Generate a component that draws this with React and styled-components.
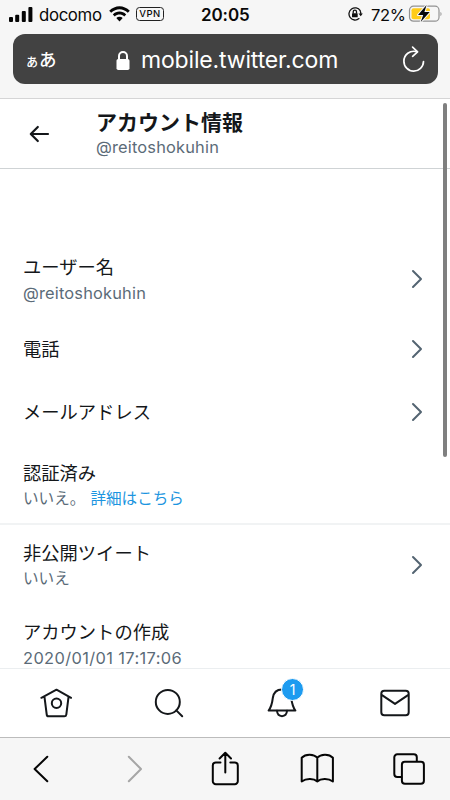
import React from 'react';
import styled, { createGlobalStyle } from 'styled-components';

const GlobalStyle = createGlobalStyle`
  * { box-sizing: border-box; }
  body {
    margin: 0;
    background: #fff;
    color: #14171a;
    font-family: Inter, "Noto Sans CJK JP", sans-serif;
  }
`;

const Screen = styled.div`
  width: 450px;
  height: 800px;
  display: flex;
  flex-direction: column;
  overflow: hidden;
  background: #fff;
`;

const BrowserTop = styled.div`
  height: 99px;
  flex: none;
  background: #f6f6f6;
  border-bottom: 1px solid #d5d5d6;
`;

const StatusBar = styled.div`
  height: 34px;
  padding: 0 7px 6px 9px;
  display: grid;
  grid-template-columns: 192px 1fr 95px;
  align-items: center;
  color: #090909;
`;

const StatusGroup = styled.div`
  display: flex;
  align-items: center;
`;

const Carrier = styled.span`
  width: 64px;
  margin: 1px 6px 0 6px;
  font-size: 16.8px;
  line-height: 20px;
  letter-spacing: -0.35px;
`;

const Vpn = styled.span`
  width: 28px;
  height: 14px;
  margin-left: 6px;
  border: 1.3px solid #222;
  border-radius: 3.5px;
  font-size: 9.5px;
  font-weight: 500;
  line-height: 12px;
  letter-spacing: 0.5px;
  text-align: center;
  white-space: nowrap;
`;

const Clock = styled.span`
  font-size: 17px;
  font-weight: 600;
  line-height: 22px;
  letter-spacing: -0.1px;
  padding: 2px 0 0 0;
`;

const Percent = styled.span`
  width: 37px;
  margin: 1px 0 0 8px;
  font-size: 16.5px;
  line-height: 20px;
  letter-spacing: -0.3px;
`;

const AddressBar = styled.div`
  height: 50px;
  margin: 0 12px 0 13px;
  padding: 0 12px;
  border-radius: 12px;
  background: #424242;
  color: #fff;
  display: grid;
  grid-template-columns: 64px 1fr 24px;
  align-items: center;
`;

const ReaderLabel = styled.span`
  padding-top: 3px;
  font-size: 17.5px;
  font-weight: 500;
  line-height: 24px;
`;

const Small = styled.span`
  font-size: 14px;
`;

const Url = styled.div`
  display: flex;
  align-items: center;
  padding: 2px 0 0 27px;
  gap: 11px;
  font-size: 23px;
  line-height: 30px;
  letter-spacing: -0.16px;
  white-space: nowrap;
`;

const PageHeader = styled.header`
  height: 70px;
  flex: none;
  display: flex;
  align-items: flex-start;
  padding: 10px 0 0 29px;
  border-bottom: 1px solid #cfd3d5;
`;

const BackButton = styled.div`
  width: 67px;
  padding-top: 16px;
  display: flex;
`;

const Title = styled.h1`
  margin: 0;
  font-size: 21px;
  font-weight: 700;
  line-height: 27px;
`;

const Handle = styled.div`
  color: #5b6b78;
  font-size: 16.4px;
  line-height: 22px;
  letter-spacing: 0.18px;
`;

const Content = styled.main`
  flex: 1;
  min-height: 0;
  padding-top: 70px;
  overflow: hidden;
`;

const Row = styled.div`
  height: ${(p) => (p.$single ? '63px' : '79px')};
  padding: 0 26px ${(p) => (p.$single ? '1px' : '0')} 23px;
  display: flex;
  align-items: center;
  justify-content: space-between;
`;

const RowText = styled.div`
  padding-top: ${(p) => p.$drop || 0}px;
`;

const Label = styled.div`
  font-size: 18.3px;
  line-height: 27px;
`;

const Detail = styled.div`
  color: #5b6b78;
  font-size: ${(p) => (p.$latin ? '16.4px' : '15.6px')};
  letter-spacing: ${(p) => p.$spacing || 0}px;
  line-height: 24px;
`;

const Link = styled.span`
  color: #1b95e0;
  margin-left: 5px;
`;

const Divider = styled.div`
  height: 2px;
  background: #f1f3f4;
`;

const Scrollbar = styled.div`
  position: absolute;
  z-index: 1;
  left: 443px;
  top: 103px;
  width: 4px;
  height: 354px;
  border-radius: 2px;
  background: #7f7f7f;
`;

const TabBar = styled.nav`
  height: 69px;
  flex: none;
  border-top: 1px solid #ebeef0;
  display: grid;
  grid-template-columns: repeat(4, 112.8px);
  place-items: center;
`;

const BellWrap = styled.div`
  position: relative;
  display: flex;
`;

const Badge = styled.span`
  position: absolute;
  left: 14px;
  top: -10px;
  width: 23px;
  height: 23px;
  border: 1px solid #fff;
  border-radius: 50%;
  background: #1d9bf0;
  color: #fff;
  font-size: 14px;
  line-height: 21px;
  text-align: center;
`;

const BrowserBar = styled.div`
  height: 63px;
  flex: none;
  border-top: 1px solid #bcbcbc;
  background: #f6f6f6;
  padding: 0 0 1px;
  display: grid;
  grid-template-columns: repeat(5, 92px);
  justify-content: center;
  place-items: center;
`;

const Svg = styled.svg`
  display: block;
  flex: none;
  fill: none;
  stroke: ${(p) => p.$color || '#14171a'};
  stroke-width: ${(p) => p.$weight || 2};
  stroke-linecap: round;
  stroke-linejoin: round;
`;

function Signal() {
  return (
    <Svg width="24" height="15" viewBox="0 0 24 15">
      <g fill="#050505" stroke="none">
        <rect x="0" y="10" width="4" height="5" rx="1" />
        <rect x="6.2" y="7.8" width="4" height="7.2" rx="1" />
        <rect x="12.8" y="4" width="4" height="11" rx="1" />
        <rect x="19.4" y="0" width="4" height="15" rx="1" />
      </g>
    </Svg>
  );
}

function Wifi() {
  return (
    <Svg width="21" height="16" viewBox="0 0 21 16">
      <g fill="#050505" stroke="none">
        <path d="M.2 4.7C6-1.4 15-1.4 20.8 4.7l-2 2.1C14.1 2.1 6.9 2.1 2.2 6.8z" />
        <path d="M3.8 8.4c3.8-3.8 9.6-3.8 13.4 0l-2 2c-2.7-2.6-6.7-2.6-9.4 0z" />
        <path d="M7.3 11.9c1.9-1.7 4.5-1.7 6.4 0l-3.2 3.5z" />
      </g>
    </Svg>
  );
}

function RotationLock() {
  return (
    <Svg width="15" height="14" viewBox="0 0 15 14" $color="#111" $weight={1.3}>
      <path d="M12.2 3.6A6.1 6.1 0 1 0 11 11.6" />
      <path d="M12.4 4.6c.5 1 .5 2 .4 3" />
      <path d="M10.5 6.4h4.3l-2.1 2.8z" fill="#111" stroke="none" />
      <rect x="4" y="6.2" width="5.7" height="4.1" rx=".6" fill="#111" stroke="none" />
      <path d="M5.2 6V4.7a1.65 1.65 0 0 1 3.3 0V6" />
    </Svg>
  );
}

function Battery() {
  return (
    <Svg width="34" height="20" viewBox="0 0 34 20" $weight={1.2} $color="#929292">
      <rect x="1.5" y="2.2" width="29.5" height="15" rx="4" />
      <path d="M32.3 8v4c1.8-.6 1.8-3.4 0-4z" fill="#aaa" stroke="none" />
      <rect x="3.5" y="4.2" width="18.5" height="11" rx="2" fill="#ffcc18" stroke="none" />
      <path d="M18.6 1.1 10 10.9h5.2l-2.5 7.2 9-10h-5.3z" fill="#080808" stroke="#f6f6f6" strokeWidth="2" paintOrder="stroke" />
    </Svg>
  );
}

function Lock() {
  return (
    <Svg width="14" height="19" viewBox="0 0 14 19" $color="#fff">
      <rect x="0.5" y="8" width="13" height="11" rx="1.8" fill="#fff" stroke="none" />
      <path d="M3 8.5V5a4 4 0 0 1 8 0v3.5" />
    </Svg>
  );
}

function Reload() {
  return (
    <Svg width="24" height="28" viewBox="0 0 24 28" $color="#fff" $weight={1.7}>
      <path d="M14.6 6.6C8 5 1.9 9.4 1.9 16.2a9.8 9.8 0 0 0 19.6.3" />
      <path d="m10.6 2.2 5 4.6-5 4.5" />
    </Svg>
  );
}

function BackArrow() {
  return (
    <Svg width="21" height="18" viewBox="0 0 21 18" $weight={2.2}>
      <path d="M8.8 2 1.8 9l7 7M2 9h17" />
    </Svg>
  );
}

function RowChevron() {
  return (
    <Svg width="14" height="20" viewBox="0 0 14 20" $color="#536471">
      <path d="m3 2 8 8-8 8" />
    </Svg>
  );
}

function Home() {
  return (
    <Svg width="32" height="30" viewBox="0 0 32 30">
      <path d="M1.4 9.8 16.5 1.7l14.6 8.1M4.5 9.1l2.2 17.3A2 2 0 0 0 8.7 28.3h15.6a2 2 0 0 0 2-1.7l2.2-17.5" />
      <circle cx="16.5" cy="15.3" r="4.7" />
    </Svg>
  );
}

function Search() {
  return (
    <Svg width="30" height="30" viewBox="0 0 30 30">
      <circle cx="13.8" cy="13.9" r="12" />
      <path d="m22.3 22.4 5.9 5.9" />
    </Svg>
  );
}

function Bell() {
  return (
    <Svg width="30" height="30" viewBox="0 0 30 30">
      <path d="M15 1.5C9 1.5 6.5 5 5.8 10c-.6 5-1.4 9-4.2 12.5h26.8C25.6 19 24.9 15 24.2 10 23.5 5 21 1.5 15 1.5z" />
      <path d="M10 22.8c.5 7.1 9.5 7.1 10 0" />
    </Svg>
  );
}

function Mail() {
  return (
    <Svg width="30" height="28" viewBox="0 0 30 28">
      <rect x="1.3" y="1.8" width="27.4" height="24.4" rx="3" />
      <path d="m2 6.2 13 8.7 13-8.7" />
    </Svg>
  );
}

function NavChevron({ forward }) {
  return (
    <Svg width="18" height="28" viewBox="0 0 18 28" $color={forward ? '#a6a6a6' : '#050505'}>
      <path d={forward ? 'm4.8 1.8 12.2 12.2-12.2 12.2' : 'M15.3 1.8 2.6 14l12.7 12.2'} />
    </Svg>
  );
}

function Share() {
  return (
    <Svg width="30" height="36" viewBox="0 0 30 36" $color="#050505">
      <path d="M10.5 11.5H5.8a3 3 0 0 0-3 3v15.7a3 3 0 0 0 3 3h19a3 3 0 0 0 3-3V14.5a3 3 0 0 0-3-3h-4.5" />
      <path d="M15.3 21.5V2M9.6 7.5 15.3 1.8 21 7.5" />
    </Svg>
  );
}

function Book() {
  return (
    <Svg width="34" height="32" viewBox="0 0 34 32" $color="#050505">
      <path d="M17.3 28.5C14 25.5 6.5 24.9 1.7 28.5V4.7c4-4.3 12.3-3.8 15.6 0 3.3-3.8 11.6-4.3 15.6 0v23.8c-4.8-3.6-12.3-3-15.6 0zM17.3 4.7v23.8" />
    </Svg>
  );
}

function Tabs() {
  return (
    <Svg width="32" height="32" viewBox="0 0 32 32" $color="#050505">
      <rect x="8.9" y="8.7" width="22" height="22" rx="3" />
      <path d="M8.3 24H4.3a3 3 0 0 1-3-3V4.3a3 3 0 0 1 3-3h16.5a3 3 0 0 1 3 3V8" />
    </Svg>
  );
}

export default function App() {
  return (
    <Screen>
      <GlobalStyle />
      <BrowserTop>
        <StatusBar>
          <StatusGroup>
            <Signal />
            <Carrier>docomo</Carrier>
            <Wifi />
            <Vpn>VPN</Vpn>
          </StatusGroup>
          <Clock>20:05</Clock>
          <StatusGroup>
            <RotationLock />
            <Percent>72%</Percent>
            <Battery />
          </StatusGroup>
        </StatusBar>
        <AddressBar>
          <ReaderLabel><Small>ぁ</Small>あ</ReaderLabel>
          <Url><Lock />mobile.twitter.com</Url>
          <Reload />
        </AddressBar>
      </BrowserTop>
      <PageHeader>
        <BackButton><BackArrow /></BackButton>
        <div>
          <Title>アカウント情報</Title>
          <Handle>@reitoshokuhin</Handle>
        </div>
      </PageHeader>
      <Scrollbar />
      <Content>
        <Row>
          <RowText $drop={1}>
            <Label>ユーザー名</Label>
            <Detail $latin $spacing={0.18}>@reitoshokuhin</Detail>
          </RowText>
          <RowChevron />
        </Row>
        <Row $single><Label>電話</Label><RowChevron /></Row>
        <Row $single><Label>メールアドレス</Label><RowChevron /></Row>
        <Row>
          <RowText $drop={3}>
            <Label>認証済み</Label>
            <Detail>いいえ。<Link>詳細はこちら</Link></Detail>
          </RowText>
        </Row>
        <Divider />
        <Row>
          <RowText $drop={1}>
            <Label>非公開ツイート</Label>
            <Detail>いいえ</Detail>
          </RowText>
          <RowChevron />
        </Row>
        <Row>
          <RowText $drop={2}>
            <Label>アカウントの作成</Label>
            <Detail $latin $spacing={0.38}>2020/01/01 17:17:06</Detail>
          </RowText>
        </Row>
      </Content>
      <TabBar>
        <Home />
        <Search />
        <BellWrap><Bell /><Badge>1</Badge></BellWrap>
        <Mail />
      </TabBar>
      <BrowserBar>
        <NavChevron />
        <NavChevron forward />
        <Share />
        <Book />
        <Tabs />
      </BrowserBar>
    </Screen>
  );
}
